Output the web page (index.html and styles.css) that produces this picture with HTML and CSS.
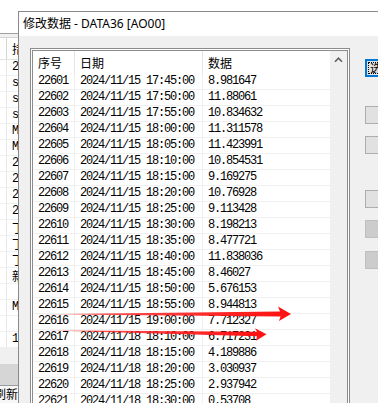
FILE: index.html
```html
<!DOCTYPE html>
<html lang="zh-CN">
<head>
    <meta charset="UTF-8">
    <title>修改数据 - DATA36 [AO00]</title>
    <link rel="stylesheet" href="styles.css">
</head>
<body>
<div class="screen">
    <!-- fenêtre principale derrière la boîte de dialogue -->
    <div class="app">
        <div class="app-top"></div>
        <div class="app-strip"></div>
        <div class="app-head"><span class="app-cell">措</span></div>
        <div class="app-rows">
            <div class="app-row"><span class="app-cell">2</span></div>
            <div class="app-row"><span class="app-cell">s</span></div>
            <div class="app-row"><span class="app-cell">s</span></div>
            <div class="app-row"><span class="app-cell">s</span></div>
            <div class="app-row"><span class="app-cell">M</span></div>
            <div class="app-row"><span class="app-cell">M</span></div>
            <div class="app-row"><span class="app-cell">2</span></div>
            <div class="app-row"><span class="app-cell">2</span></div>
            <div class="app-row"><span class="app-cell">2</span></div>
            <div class="app-row"><span class="app-cell">2</span></div>
            <div class="app-row"><span class="app-cell cjk">丁</span></div>
            <div class="app-row"><span class="app-cell cjk">丁</span></div>
            <div class="app-row"><span class="app-cell cjk">丁</span></div>
            <div class="app-row"><span class="app-cell cjk">新</span></div>
            <div class="app-row"><span class="app-cell"></span></div>
            <div class="app-row"><span class="app-cell">M</span></div>
            <div class="app-row"><span class="app-cell"></span></div>
            <div class="app-row"><span class="app-cell">1</span></div>
        </div>
        <div class="app-gap"></div>
        <div class="app-bar"></div>
        <div class="app-foot">刷新全部</div>
    </div>

    <div class="dialog">
        <div class="title">修改数据 - DATA36 [AO00]</div>
        <div class="dialog-body">
            <div class="listview">
                <div class="list-main">
                    <div class="list-head">
                        <div class="hcell">序号</div>
                        <div class="hcell">日期</div>
                        <div class="hcell">数据</div>
                    </div>
                    <div class="list-row"><div class="cell">22601</div><div class="cell">2024/11/15 17:45:00</div><div class="cell">8.981647</div></div>
                    <div class="list-row"><div class="cell">22602</div><div class="cell">2024/11/15 17:50:00</div><div class="cell">11.88061</div></div>
                    <div class="list-row"><div class="cell">22603</div><div class="cell">2024/11/15 17:55:00</div><div class="cell">10.834632</div></div>
                    <div class="list-row"><div class="cell">22604</div><div class="cell">2024/11/15 18:00:00</div><div class="cell">11.311578</div></div>
                    <div class="list-row"><div class="cell">22605</div><div class="cell">2024/11/15 18:05:00</div><div class="cell">11.423991</div></div>
                    <div class="list-row"><div class="cell">22606</div><div class="cell">2024/11/15 18:10:00</div><div class="cell">10.854531</div></div>
                    <div class="list-row"><div class="cell">22607</div><div class="cell">2024/11/15 18:15:00</div><div class="cell">9.169275</div></div>
                    <div class="list-row"><div class="cell">22608</div><div class="cell">2024/11/15 18:20:00</div><div class="cell">10.76928</div></div>
                    <div class="list-row"><div class="cell">22609</div><div class="cell">2024/11/15 18:25:00</div><div class="cell">9.113428</div></div>
                    <div class="list-row"><div class="cell">22610</div><div class="cell">2024/11/15 18:30:00</div><div class="cell">8.198213</div></div>
                    <div class="list-row"><div class="cell">22611</div><div class="cell">2024/11/15 18:35:00</div><div class="cell">8.477721</div></div>
                    <div class="list-row"><div class="cell">22612</div><div class="cell">2024/11/15 18:40:00</div><div class="cell">11.838036</div></div>
                    <div class="list-row"><div class="cell">22613</div><div class="cell">2024/11/15 18:45:00</div><div class="cell">8.46027</div></div>
                    <div class="list-row"><div class="cell">22614</div><div class="cell">2024/11/15 18:50:00</div><div class="cell">5.676153</div></div>
                    <div class="list-row"><div class="cell">22615</div><div class="cell">2024/11/15 18:55:00</div><div class="cell">8.944813</div></div>
                    <div class="list-row"><div class="cell">22616</div><div class="cell">2024/11/15 19:00:00</div><div class="cell">7.712327</div></div>
                    <div class="list-row"><div class="cell">22617</div><div class="cell">2024/11/18 18:10:00</div><div class="cell">6.717231</div></div>
                    <div class="list-row"><div class="cell">22618</div><div class="cell">2024/11/18 18:15:00</div><div class="cell">4.189886</div></div>
                    <div class="list-row"><div class="cell">22619</div><div class="cell">2024/11/18 18:20:00</div><div class="cell">3.030937</div></div>
                    <div class="list-row"><div class="cell">22620</div><div class="cell">2024/11/18 18:25:00</div><div class="cell">2.937942</div></div>
                    <div class="list-row"><div class="cell">22621</div><div class="cell">2024/11/18 18:30:00</div><div class="cell">0.53708</div></div>
                    <div class="list-row"><div class="cell">22622</div><div class="cell">2024/11/18 18:35:00</div><div class="cell">0.91254</div></div>
                </div>
                <div class="scrollbar">
                    <svg class="scroll-up" width="17" height="17" viewBox="0 0 17 17">
                        <polyline points="5,10.8 8.5,7.2 12,10.8" fill="none" stroke="#606060" stroke-width="1.6"/>
                    </svg>
                </div>
            </div>

            <div class="side">
                <button class="btn btn-focus"><span class="focus-rect">选择</span></button>
                <div class="btn-group group-2">
                    <button class="btn"></button>
                    <button class="btn"></button>
                </div>
                <div class="btn-group group-3">
                    <button class="btn"></button>
                    <button class="btn" disabled></button>
                    <button class="btn btn-last" disabled></button>
                </div>
            </div>
        </div>
    </div>

    <!-- flèches rouges dessinées par-dessus la capture -->
    <svg class="arrows" width="378" height="403" viewBox="0 0 378 403">
        <defs>
            <linearGradient id="fade" x1="0" y1="0" x2="1" y2="0">
                <stop offset="0" stop-color="#ff3030" stop-opacity="0.15"/>
                <stop offset="0.25" stop-color="#ff2020" stop-opacity="0.8"/>
                <stop offset="1" stop-color="#ff1010"/>
            </linearGradient>
        </defs>
        <polygon fill="url(#fade)" points="36,314.2 280,311.6 278,306.5 291,314 279,321 280.5,316.4"/>
        <polygon fill="url(#fade)" points="38,330.2 257,331.8 255,328.3 266.5,334.2 256,340.7 257,336.2"/>
    </svg>
</div>
</body>
</html>
```

FILE: styles.css
```css
* {
    box-sizing: border-box;
}

body {
    margin: 0;
    font-family: "Noto Sans CJK SC", sans-serif;
    font-size: 12px;
    color: #000;
}

.screen {
    position: relative;
    width: 378px;
    height: 403px;
    overflow: hidden;
    background: #fff;
}

/* fenêtre de fond */
.app {
    display: flex;
    flex-direction: column;
    width: 378px;
    height: 403px;
}

.app-top {
    height: 34px;
    border-bottom: 1px solid #a0a0a0;
}

.app-strip {
    height: 3px;
    background: #f0f0f0;
}

.app-head {
    display: flex;
    height: 23px;
    padding-left: 6px;
    border-top: 1px solid #d5d5d5;
    border-bottom: 1px solid #e3e3e3;
}

.app-head .app-cell {
    line-height: 21px;
    font-family: "Noto Sans CJK SC", sans-serif;
    border-left: 1px solid #d5d5d5;
}

.app-row {
    display: flex;
    height: 16px;
    padding-left: 6px;
    border-bottom: 1px solid #f0f0f0;
}

.app-cell {
    width: 40px;
    padding-left: 5px;
    line-height: 15px;
    font-family: "Liberation Mono", "Noto Sans CJK SC", monospace;
    font-size: 12px;
    border-left: 1px solid #e8e8e8;
}

.app-cell.cjk {
    font-family: "Noto Sans CJK SC", sans-serif;
}

.app-gap {
    height: 16px;
    background: #f0f0f0;
}

.app-bar {
    height: 21px;
    background: #d6d6d6;
}

.app-foot {
    flex: 1;
    border-top: 1px solid #9a9a9a;
    background: #f7f7f7;
    text-indent: -6px;
    line-height: 16px;
}

/* boîte de dialogue */
.dialog {
    position: absolute;
    left: 18px;
    top: 11px;
    width: 380px;
    height: 400px;
    background: #f0f0f0;
    border-left: 1px solid #8a8a8a;
    border-top: 1px solid #8a8a8a;
}

.title {
    height: 24px;
    padding-left: 4px;
    background: #fff;
    line-height: 24px;
    font-family: "Noto Sans", "Noto Sans CJK SC", sans-serif;
    font-size: 12px;
    white-space: nowrap;
}

.dialog-body {
    display: flex;
    align-items: flex-start;
    padding: 12px 0 0 11px;
}

.listview {
    display: flex;
    width: 320px;
    height: 380px;
    flex-shrink: 0;
    background: #fff;
    border: 3px double #8c8c8c;
    overflow: hidden;
}

.list-main {
    width: 297px;
}

.list-head,
.list-row {
    display: grid;
    grid-template-columns: 42px 128px 127px;
}

.list-head {
    height: 23px;
}

.hcell {
    padding-left: 5px;
    line-height: 23px;
    font-size: 12px;
    border-right: 1px solid #e5e5e5;
}

.hcell:last-child {
    border-right: none;
}

.list-row {
    height: 16px;
    border-bottom: 1px solid #f0f0f0;
}

.cell {
    padding-left: 5px;
    line-height: 15px;
    font-family: "Liberation Mono", monospace;
    font-size: 12px;
    letter-spacing: -1.2px;
    white-space: nowrap;
    border-right: 1px solid #f0f0f0;
}

.cell:last-child {
    border-right: none;
}

.scrollbar {
    width: 17px;
    background: #f0f0f0;
}

.scroll-up {
    display: block;
}

/* boutons à droite */
.side {
    display: flex;
    flex-direction: column;
    margin: 11px 0 0 15px;
}

.btn {
    display: block;
    width: 80px;
    height: 18px;
    padding: 0;
    background: #e1e1e1;
    border: 1px solid #adadad;
    font-family: "Noto Sans CJK SC", sans-serif;
    font-size: 12px;
}

.btn:disabled {
    background: #cccccc;
    border-color: #bfbfbf;
}

.btn-focus {
    border: 2px solid #0078d7;
    padding: 1px;
    text-align: left;
}

.focus-rect {
    display: block;
    height: 100%;
    padding-left: 1px;
    border: 1px dotted #000;
    line-height: 10px;
    overflow: hidden;
}

.btn-group {
    display: flex;
    flex-direction: column;
    gap: 12px;
}

.group-2 {
    margin-top: 29px;
}

.group-3 {
    margin-top: 36px;
}

.btn-last {
    margin-top: 1px;
}

.arrows {
    position: absolute;
    left: 0;
    top: 0;
    pointer-events: none;
}
```
